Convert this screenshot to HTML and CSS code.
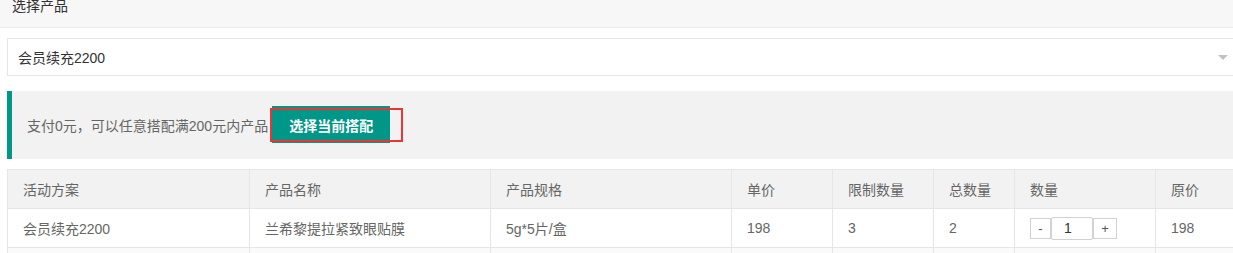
FILE: index.html
```html
<!DOCTYPE html>
<html lang="zh-CN">
<head>
<meta charset="utf-8">
<title>选择产品</title>
<link rel="stylesheet" href="styles.css">
</head>
<body>
<div class="page">
  <div class="card-header">选择产品</div>
  <div class="card-body">
    <div class="select">
      <span class="select-value">会员续充2200</span>
      <i class="select-arrow"></i>
    </div>
    <div class="quote">
      <span class="quote-text">支付0元，可以任意搭配满200元内产品</span>
      <span class="btn-wrap">
        <button class="btn">选择当前搭配</button>
        <span class="mark"></span>
      </span>
    </div>
    <table class="table">
      <colgroup>
        <col class="c1"><col class="c2"><col class="c3"><col class="c4"><col class="c5"><col class="c6"><col class="c7"><col class="c8">
      </colgroup>
      <thead>
        <tr><th>活动方案</th><th>产品名称</th><th>产品规格</th><th>单价</th><th>限制数量</th><th>总数量</th><th>数量</th><th>原价</th></tr>
      </thead>
      <tbody>
        <tr>
          <td>会员续充2200</td><td>兰希黎提拉紧致眼贴膜</td><td>5g*5片/盒</td><td>198</td><td>3</td><td>2</td>
          <td><div class="qty"><span class="qty-btn">-</span><span class="qty-input">1</span><span class="qty-btn">+</span></div></td>
          <td>198</td>
        </tr>
        <tr class="next"><td></td><td></td><td></td><td></td><td></td><td></td><td></td><td></td></tr>
      </tbody>
    </table>
  </div>
</div>
</body>
</html>
```
FILE: styles.css
```css
html, body {
  margin: 0;
  padding: 0;
  background: #fff;
  overflow: hidden;
}
.page {
  width: 1240px;
  font-family: "Liberation Sans", "Noto Sans CJK SC", sans-serif;
  font-size: 14px;
  color: #333;
}
.card-header {
  height: 28px;
  box-sizing: border-box;
  background: #f7f7f7;
  border-bottom: 1px solid #ebebeb;
  padding-left: 12px;
  line-height: 12px;
  color: #333;
}
.card-body {
  padding: 10px 0 0 7px;
}
.select {
  height: 38px;
  box-sizing: border-box;
  border: 1px solid #e6e6e6;
  border-right: none;
  display: flex;
  align-items: center;
  padding-left: 10px;
  position: relative;
}
.select-value {
  color: #333;
}
.select-arrow {
  position: absolute;
  right: 12px;
  top: 16px;
  width: 0;
  height: 0;
  border-left: 5px solid transparent;
  border-right: 5px solid transparent;
  border-top: 5px solid #c2c2c2;
}
.quote {
  margin-top: 15px;
  height: 68px;
  box-sizing: border-box;
  background: #f2f2f2;
  border-left: 5px solid #009688;
  display: flex;
  align-items: center;
  padding-left: 15px;
}
.quote-text {
  color: #666;
}
.btn-wrap {
  position: relative;
  margin-left: 4px;
  display: inline-flex;
}
.btn {
  width: 118px;
  height: 37px;
  border: none;
  background: #009688;
  color: #fff;
  font-family: inherit;
  font-size: 14px;
  font-weight: bold;
  padding: 0;
  margin-top: -1px;
}
.mark {
  position: absolute;
  left: -2px;
  top: 1px;
  width: 133px;
  height: 34px;
  border: 2px solid #ee3333;
  box-sizing: border-box;
}
.table {
  margin-top: 10px;
  border-collapse: collapse;
  table-layout: fixed;
  width: 1240px;
  color: #666;
}
.c1 { width: 242px; }
.c2 { width: 241px; }
.c3 { width: 241px; }
.c4 { width: 101px; }
.c5 { width: 101px; }
.c6 { width: 81px; }
.c7 { width: 141px; }
.c8 { width: 92px; }
.table th, .table td {
  border: 1px solid #e6e6e6;
  height: 39px;
  padding: 0 15px;
  text-align: left;
  font-weight: normal;
  box-sizing: border-box;
}
.table thead th {
  background: #f2f2f2;
  color: #666;
}
.table tr.next td {
  background: #fafafa;
}
.qty {
  display: flex;
  align-items: center;
}
.qty-btn {
  width: 21px;
  height: 21px;
  box-sizing: border-box;
  border: 1px solid #d2d2d2;
  display: flex;
  align-items: center;
  justify-content: center;
  font-size: 13px;
  color: #555;
  background: #fff;
}
.qty-btn:last-child {
  width: 24px;
}
.qty-input {
  width: 42px;
  height: 23px;
  box-sizing: border-box;
  border: 1px solid #d2d2d2;
  border-radius: 2px;
  padding-left: 12px;
  display: flex;
  align-items: center;
  color: #333;
  font-size: 14px;
}
```
